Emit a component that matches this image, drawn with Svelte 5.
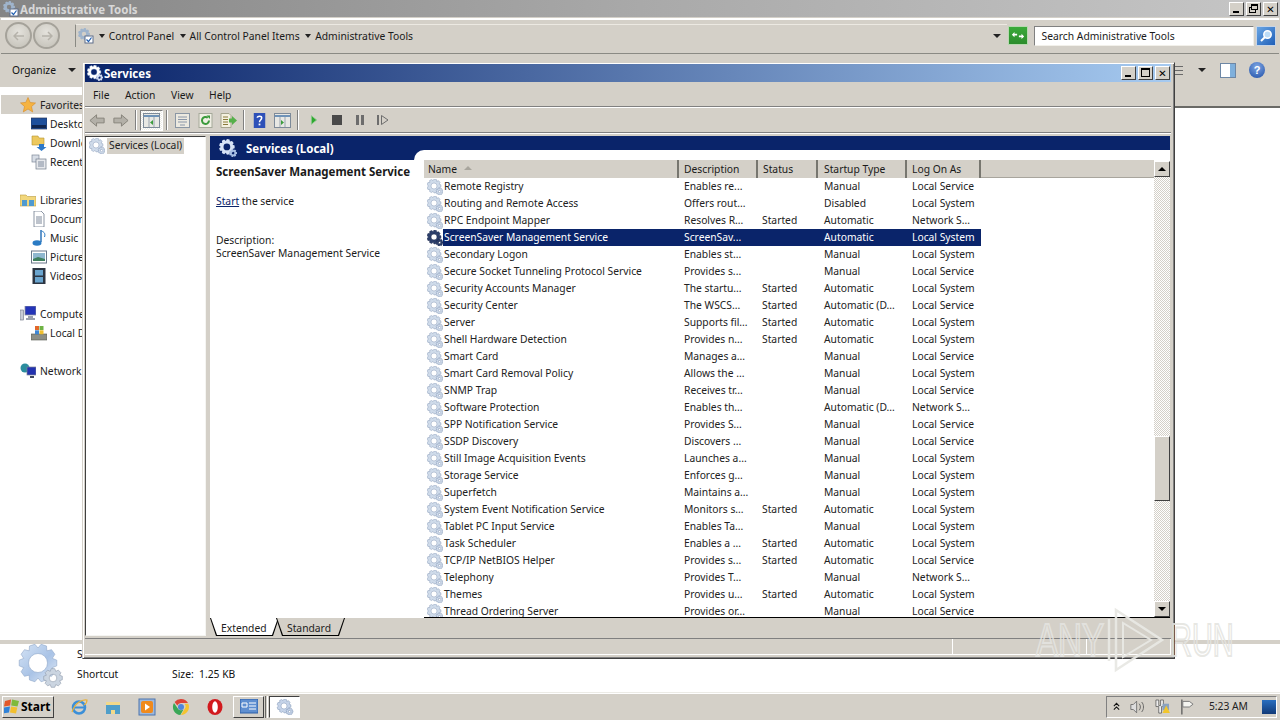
<script>
  const rows = [
    ["Remote Registry","Enables re...","","Manual","Local Service"],
    ["Routing and Remote Access","Offers rout...","","Disabled","Local System"],
    ["RPC Endpoint Mapper","Resolves R...","Started","Automatic","Network S..."],
    ["ScreenSaver Management Service","ScreenSav...","","Automatic","Local System"],
    ["Secondary Logon","Enables st...","","Manual","Local System"],
    ["Secure Socket Tunneling Protocol Service","Provides s...","","Manual","Local Service"],
    ["Security Accounts Manager","The startu...","Started","Automatic","Local System"],
    ["Security Center","The WSCS...","Started","Automatic (D...","Local Service"],
    ["Server","Supports fil...","Started","Automatic","Local System"],
    ["Shell Hardware Detection","Provides n...","Started","Automatic","Local System"],
    ["Smart Card","Manages a...","","Manual","Local Service"],
    ["Smart Card Removal Policy","Allows the ...","","Manual","Local System"],
    ["SNMP Trap","Receives tr...","","Manual","Local Service"],
    ["Software Protection","Enables th...","","Automatic (D...","Network S..."],
    ["SPP Notification Service","Provides S...","","Manual","Local Service"],
    ["SSDP Discovery","Discovers ...","","Manual","Local Service"],
    ["Still Image Acquisition Events","Launches a...","","Manual","Local System"],
    ["Storage Service","Enforces g...","","Manual","Local System"],
    ["Superfetch","Maintains a...","","Manual","Local System"],
    ["System Event Notification Service","Monitors s...","Started","Automatic","Local System"],
    ["Tablet PC Input Service","Enables Ta...","","Manual","Local System"],
    ["Task Scheduler","Enables a ...","Started","Automatic","Local System"],
    ["TCP/IP NetBIOS Helper","Provides s...","Started","Automatic","Local Service"],
    ["Telephony","Provides T...","","Manual","Network S..."],
    ["Themes","Provides u...","Started","Automatic","Local System"],
    ["Thread Ordering Server","Provides or...","","Manual","Local Service"]
  ];
  const nav = [
    { t: "Favorites", k: "star", top: true, hi: true },
    { t: "Desktop", k: "desk" }, { t: "Downloads", k: "down" }, { t: "Recent Places", k: "recent", end: true },
    { t: "Libraries", k: "lib", top: true },
    { t: "Documents", k: "doc" }, { t: "Music", k: "music" }, { t: "Pictures", k: "pic" }, { t: "Videos", k: "vid", end: true },
    { t: "Computer", k: "comp", top: true }, { t: "Local Disk (C:)", k: "disk", end: true },
    { t: "Network", k: "net", top: true }
  ];
  function gearPath(cx, cy, R, r, hole, n) {
    let d = "";
    const step = (Math.PI * 2) / n;
    for (let i = 0; i < n; i++) {
      const a = i * step;
      const pts = [[r, a - step * 0.5], [R, a - step * 0.24], [R, a + step * 0.24], [r, a + step * 0.5]];
      for (const [rad, ang] of pts) {
        d += (d ? "L" : "M") + (cx + rad * Math.cos(ang)).toFixed(2) + " " + (cy + rad * Math.sin(ang)).toFixed(2);
      }
    }
    d += "Z M" + (cx + hole) + " " + cy + " a" + hole + " " + hole + " 0 1 0 " + -2 * hole + " 0 a" + hole + " " + hole + " 0 1 0 " + 2 * hole + " 0Z";
    return d;
  }
  const gearBig = gearPath(7, 7, 7, 5.4, 3, 9);
  const gearSmall = gearPath(12.5, 12.5, 3.6, 2.6, 1.2, 7);
  const bigA = gearPath(21, 19, 19, 15, 9.5, 10);
  const bigB = gearPath(36, 34, 9.5, 7.2, 3.8, 8);
</script>

{#snippet gears(cls)}
  <svg class={cls} viewBox="0 0 16 16" aria-hidden="true">
    <path d={gearBig} fill-rule="evenodd" />
    <path d={gearSmall} fill-rule="evenodd" />
  </svg>
{/snippet}

{#snippet navIcon(k)}
  <svg class="nico" viewBox="0 0 16 16" aria-hidden="true">
    {#if k === "star"}
      <path d="M8 0.5l2.2 5 5.3.5-4 3.6 1.2 5.4L8 12l-4.7 2.9 1.2-5.4-4-3.6 5.3-.5z" fill="#f5b342" stroke="#d98a22" stroke-width=".6" />
    {:else if k === "desk"}
      <rect x="0" y="2" width="16" height="11" fill="#1d4f9c" stroke="#26365a" stroke-width=".7" /><rect x="1" y="9" width="14" height="3" fill="#10254e" />
    {:else if k === "down"}
      <path d="M1 1h6l1 2h5v7H1z" fill="#ecc85e" stroke="#b6952f" stroke-width=".6" /><path d="M8 9h5v3h2.5l-5 4-5-4H8z" fill="#2c78c9" />
    {:else if k === "recent"}
      <rect x="1" y="1" width="7" height="7" fill="#d8dee6" stroke="#7e8897" stroke-width=".7" /><rect x="5" y="5" width="10" height="10" fill="#e6e8ec" stroke="#707b8a" stroke-width=".7" /><path d="M7 8h6M7 10h6M7 12h6" stroke="#66748a" stroke-width=".8" />
    {:else if k === "lib"}
      <path d="M0 3h6l1.500 1.500H16V14H0z" fill="#f2d77c" stroke="#b89a40" stroke-width=".6" /><rect x="2" y="8" width="5" height="6" fill="#4f9ad0" /><rect x="9" y="8" width="5" height="6" fill="#4f9ad0" />
    {:else if k === "doc"}
      <path d="M3 0h7l3 3v13H3z" fill="#fff" stroke="#6e7b8e" stroke-width=".8" /><path d="M5 6h6M5 8h6M5 10h6M5 12h6" stroke="#5a6a80" stroke-width=".8" />
    {:else if k === "music"}
      <path d="M10 0v12" stroke="#1f6ab5" stroke-width="1.400" /><ellipse cx="6" cy="13" rx="4.500" ry="2.800" fill="#2a7bc4" /><path d="M10.500 1c3 1 4 3 3 6" stroke="#2a7bc4" fill="none" />
    {:else if k === "pic"}
      <rect x=".5" y="2" width="15" height="12" fill="#fff" stroke="#6a7789" /><rect x="2" y="4" width="12" height="8" fill="#8fb7cf" /><path d="M2 10l5-2 7 2v2H2z" fill="#3f7f5e" />
    {:else if k === "vid"}
      <rect x="1.500" y="0" width="13" height="16" fill="#2c3542" /><rect x="4" y="2" width="8" height="5.500" fill="#6aa5cf" /><rect x="4" y="9" width="8" height="5.500" fill="#6aa5cf" />
    {:else if k === "comp"}
      <rect x="5" y="0" width="11" height="9" fill="#2434b8" stroke="#8a8fa0" stroke-width=".8" /><rect x="0" y="4" width="3.500" height="10" fill="#c8ccd6" stroke="#6a7080" stroke-width=".6" /><path d="M8 10h5v2h2v2H6v-2h2z" fill="#9aa0ae" />
    {:else if k === "disk"}
      <rect x="0" y="9" width="16" height="6" fill="#8d8f86" stroke="#55574f" stroke-width=".6" /><rect x="4" y="1" width="4" height="4" fill="#e2672a" /><rect x="8.500" y="1" width="4" height="4" fill="#6fb344" /><rect x="4" y="5.300" width="4" height="4" fill="#3e86d4" /><rect x="8.500" y="5.300" width="4" height="4" fill="#f0c02f" />
    {:else if k === "net"}
      <circle cx="5" cy="5" r="4.500" fill="#2b8d9e" /><rect x="7" y="4" width="9" height="8" fill="#2232b0" stroke="#7d8294" stroke-width=".7" /><path d="M10 13h4v2h-4z" fill="#40495e" />
    {/if}
  </svg>
{/snippet}

{#snippet adminIcon(cls)}
  <svg class={cls} viewBox="0 0 16 16" aria-hidden="true">
    <path d={gearPath(6, 6, 6, 4.6, 2.2, 9)} fill="#9fb4cc" fill-rule="evenodd" /><rect x="7" y="8" width="8" height="7" fill="#fff" stroke="#5c6d8a" /><path d="M8.500 11.500l2 2 3-4" stroke="#1e5db0" fill="none" stroke-width="1.200" />
  </svg>
{/snippet}

<div class="desk">
  <div class="titlebar">
    {@render adminIcon("t-ico")}
    <span class="t-text">Administrative Tools</span>
    <div class="capbtns outer">
      <button class="cap"><i class="min"></i></button>
      <button class="cap"><i class="rest"></i></button>
      <button class="cap close">✕</button>
    </div>
  </div>

  <div class="addr">
    <div class="navbtns">
      <span class="round"><svg viewBox="0 0 12 10" aria-hidden="true"><path d="M5 1L1 5l4 4M1 5h10" /></svg></span>
      <span class="round"><svg viewBox="0 0 12 10" aria-hidden="true"><path d="M7 1l4 4-4 4M11 5H1" /></svg></span>
    </div>
    <div class="crumbs">
      {@render adminIcon("cr-ico")}
      <i class="tri"></i><span>Control Panel</span>
      <i class="tri"></i><span>All Control Panel Items</span>
      <i class="tri"></i><span>Administrative Tools</span>
      <i class="tri far"></i>
    </div>
    <span class="go"><svg viewBox="0 0 16 12" aria-hidden="true"><path d="M1 5l3-3v2h3v2H4v2zM15 7l-3 3V8H9V6h3V4z" fill="#fff" /></svg></span>
    <div class="search">Search Administrative Tools</div>
    <span class="sbtn"><svg viewBox="0 0 14 14" aria-hidden="true"><circle cx="8.500" cy="5.500" r="3.700" fill="#bcdcf7" stroke="#fff" stroke-width="1.500" /><path d="M6 8l-4 4" stroke="#fff" stroke-width="2" /></svg></span>
  </div>

  <div class="orgbar">
    <span class="org">Organize</span><i class="tri"></i>
    <span class="org-right">
      <svg class="lines" viewBox="0 0 8 11" aria-hidden="true"><path d="M0 1.500h8M0 5.500h8M0 9.500h8" stroke="#6a6a6a" /></svg>
      <i class="tri"></i>
      <span class="pane-ic"></span>
      <span class="help">?</span>
    </span>
  </div>

  <div class="main">
    <div class="navtree">
      {#each nav as n}
        <div class="nrow" class:top={n.top} class:hi={n.hi} class:end={n.end}>
          {@render navIcon(n.k)}<span>{n.t}</span>
        </div>
      {/each}
    </div>
    <div class="colhead"></div>
  </div>

  <div class="details">
    <svg class="biggear" viewBox="0 0 46 44" aria-hidden="true">
      <defs>
        <linearGradient id="gb" x1="0" y1="0" x2="1" y2="1">
          <stop offset="0" stop-color="#d6e4f5" /><stop offset=".55" stop-color="#a9c3e6" /><stop offset="1" stop-color="#e4ecf6" />
        </linearGradient>
      </defs>
      <path d={bigA} fill="url(#gb)" stroke="#8ea6c8" stroke-width=".6" fill-rule="evenodd" />
      <path d={bigB} fill="#cbd5e1" stroke="#8f9bab" stroke-width=".6" fill-rule="evenodd" />
    </svg>
    <div class="dtext">
      <div class="dname">Services</div>
      <div class="dmeta"><span class="dkind">Shortcut</span><span>Size:&nbsp; 1.25 KB</span></div>
    </div>
  </div>

  <div class="taskbar">
    <button class="start">
      <svg viewBox="0 0 16 15" aria-hidden="true">
        <path d="M1 2l6-1.500L6.200 6.500 0 7.500z" fill="#e2582a" /><path d="M8 .5l7 1.500-1.500 5.500L7.200 6.500z" fill="#7fb93a" /><path d="M0 8.500l6-1-1 6-6.200 1z" fill="#2f82d8" /><path d="M7 7.500l6.300 1-1.300 6-6-1z" fill="#f2bf2e" />
      </svg>Start
    </button>
    <div class="quick">
      <svg viewBox="0 0 18 18" aria-hidden="true"><circle cx="9" cy="9.500" r="6" fill="none" stroke="#3b8fd8" stroke-width="2.500" /><path d="M3 9.500h12" stroke="#3b8fd8" stroke-width="2" /><path d="M2 14C5 5 12 1 17 2c0 2-1 4-3 5" fill="none" stroke="#e9b23a" stroke-width="1.200" /></svg>
      <svg viewBox="0 0 18 18" aria-hidden="true"><path d="M2 4h14v12H2z" fill="#f2d98a" /><path d="M2 7h14v9h-5v-4H7v4H2z" fill="#4f9ec9" /></svg>
      <svg viewBox="0 0 18 18" aria-hidden="true"><rect x="1" y="1" width="16" height="16" fill="#9db8dc" stroke="#4d75ad" /><rect x="3" y="3" width="12" height="12" rx="2" fill="#f08a1c" /><path d="M7 5.500l5 3.500-5 3.500z" fill="#fff" /></svg>
      <svg viewBox="0 0 18 18" aria-hidden="true"><path d="M9 1a8 8 0 0 1 7 4H9a4 4 0 0 0-3.700 2.500L2.600 4A8 8 0 0 1 9 1z" fill="#dc4438" /><path d="M16.300 5.800A8 8 0 0 1 9 17l3.400-5.800a4 4 0 0 0 0-5.400z" fill="#f4c430" /><path d="M2 5a8 8 0 0 0 6.300 12l3.200-5.500a4 4 0 0 1-6-1.500z" fill="#3aa757" /><circle cx="9" cy="9" r="3" fill="#4e86dc" /></svg>
      <svg viewBox="0 0 18 18" aria-hidden="true"><ellipse cx="9" cy="9" rx="7.500" ry="8" fill="#d21a1e" /><ellipse cx="9" cy="9" rx="2.800" ry="5.800" fill="#fff" /></svg>
    </div>
    <button class="tb-btn"><svg viewBox="0 0 18 16" aria-hidden="true"><rect x="0" y="0" width="18" height="14" fill="#5f8fd0" stroke="#2d5ea8" /><path d="M2 4h5v4H2zM9 4h7M9 7h7M9 10h7" stroke="#fff" fill="none" /></svg></button>
    <span class="tb-sep"></span>
    <button class="tb-btn active">{@render gears("gear g-task")}</button>
    <div class="tray">
      <svg class="tr-ar" viewBox="0 0 8 9" aria-hidden="true"><path d="M1 4l3-3 3 3M1 8l3-3 3 3" stroke="#111" fill="none" stroke-width="1.300" /></svg>
      <svg class="tr-ic" viewBox="0 0 18 16" aria-hidden="true"><path d="M1 5h3l4-4v14l-4-4H1z" fill="#ddd" stroke="#666" /><path d="M11 4c2 2 2 6 0 8M14 2c3 3 3 9 0 12" stroke="#555" fill="none" /></svg>
      <svg class="tr-ic" viewBox="0 0 16 17" aria-hidden="true"><path d="M1 1h3v6h2V1h3v7H7v7H4V8H1z" fill="#eee" stroke="#555" stroke-width=".8" /><rect x="8" y="5" width="7" height="7" fill="#8aa2bf" /><path d="M12 7l4 8H8z" fill="#f2c62c" /></svg>
      <svg class="tr-ic" viewBox="0 0 16 16" aria-hidden="true"><path d="M2 0v16" stroke="#555" stroke-width="1.300" /><path d="M3 2h7l4 3-4 3H3z" fill="#f4f4f0" stroke="#777" /></svg>
      <span class="clock">5:23 AM</span>
      <span class="showdesk"></span>
    </div>
  </div>

  <!-- Services window floats over the explorer window -->
  <div class="win">
    <div class="w-title">
      <svg class="w-ico" viewBox="0 0 16 16" aria-hidden="true"><path d={gearBig} fill="#fff" stroke="#8aa6d0" stroke-width=".4" fill-rule="evenodd" /><path d={gearSmall} fill="#cfdaf0" fill-rule="evenodd" /></svg>
      <span>Services</span>
      <div class="capbtns inner">
        <button class="cap"><i class="min"></i></button>
        <button class="cap"><i class="max"></i></button>
        <button class="cap close">✕</button>
      </div>
    </div>
    <div class="menubar"><span>File</span><span>Action</span><span>View</span><span>Help</span></div>
    <div class="toolbar">
      <span class="ti"><svg viewBox="0 0 18 14" aria-hidden="true"><path d="M8 1L1 7l7 6V9.500h8v-5H8z" class="ghost" /></svg></span>
      <span class="ti"><svg viewBox="0 0 18 14" aria-hidden="true"><path d="M10 1l7 6-7 6V9.500H2v-5h8z" class="ghost" /></svg></span>
      <i class="tsep"></i>
      <span class="ti on"><svg viewBox="0 0 17 15" aria-hidden="true"><rect x=".5" y=".5" width="16" height="14" fill="#e8e8e4" stroke="#7d8a99" /><path d="M1 3h15" stroke="#6f93b8" stroke-width="2" /><path d="M6 4v10M11 4v10" stroke="#9aa5b0" /><path d="M10 7l-3 2.500 3 2.500z" fill="#3c9c3c" /></svg></span>
      <i class="tsep"></i>
      <span class="ti"><svg viewBox="0 0 15 15" aria-hidden="true"><rect x=".5" y=".5" width="14" height="14" fill="#ece9e0" stroke="#8a96a4" /><path d="M3 4h9M3 6.500h9M3 9h9M5 12h5" stroke="#8a96a8" /></svg></span>
      <span class="ti"><svg viewBox="0 0 14 15" aria-hidden="true"><rect x=".5" y=".5" width="13" height="14" fill="#f0efe4" stroke="#a5a99a" /><path d="M10.500 7.500a3.500 3.500 0 1 1-1.200-2.700" fill="none" stroke="#3a9a3a" stroke-width="2" /><path d="M8 2.500h3.500V6z" fill="#3a9a3a" /></svg></span>
      <span class="ti"><svg viewBox="0 0 17 15" aria-hidden="true"><path d="M1 .5h8l2 2v12H1z" fill="#f4f1e0" stroke="#a5a48d" /><path d="M3 4h5M3 6.500h5M3 9h5M3 11.500h5" stroke="#8a7a3a" /><path d="M9 5.500h3V3l5 4.500-5 4.500V9.500H9z" fill="#56b04a" /></svg></span>
      <i class="tsep"></i>
      <span class="ti"><svg viewBox="0 0 13 17" aria-hidden="true"><rect width="13" height="17" fill="#2d50b8" /><path d="M4 5.500C4 3 9 3 9 5.500 9 8 6.500 8 6.500 10.500" fill="none" stroke="#fff" stroke-width="1.700" /><rect x="5.500" y="12" width="2" height="2" fill="#fff" /></svg></span>
      <span class="ti"><svg viewBox="0 0 17 15" aria-hidden="true"><rect x=".5" y=".5" width="16" height="14" fill="#e8e8e4" stroke="#7d8a99" /><path d="M1 3h15" stroke="#6f93b8" stroke-width="2" /><path d="M6 4v10M11 4v10" stroke="#9aa5b0" /><path d="M7 7l3 2.500-3 2.500z" fill="#3c9c3c" /></svg></span>
      <i class="tsep"></i>
      <span class="ti"><svg viewBox="0 0 12 14" class="s12" aria-hidden="true"><path d="M3 2l6 5-6 5z" fill="#2fa82f" stroke="#8ac88a" /></svg></span>
      <span class="ti"><svg viewBox="0 0 12 12" class="s12" aria-hidden="true"><rect x="1" y="1" width="10" height="10" fill="#4a4a4a" /></svg></span>
      <span class="ti"><svg viewBox="0 0 12 12" class="s12" aria-hidden="true"><path d="M2 1h3v10H2zM7 1h3v10H7z" fill="#6d6d6d" /></svg></span>
      <span class="ti"><svg viewBox="0 0 14 12" class="s14" aria-hidden="true"><path d="M1 1h2v10H1z" fill="#6d6d6d" /><path d="M5.500 1.500l6.500 4.500-6.500 4.500z" fill="#d4d0c8" stroke="#6d6d6d" /></svg></span>
    </div>

    <div class="content">
      <div class="tree">
        <div class="tree-row">{@render gears("gear g-list")}<span>Services (Local)</span></div>
      </div>
      <div class="pane">
        <div class="band">
          <svg class="band-ico" viewBox="0 0 16 16" aria-hidden="true"><path d={gearBig} fill="#d7e3f6" fill-rule="evenodd" /><path d={gearSmall} fill="#a9bfe3" fill-rule="evenodd" /></svg>
          <span>Services (Local)</span>
        </div>
        <div class="split">
          <div class="info">
            <div class="i-title">ScreenSaver Management Service</div>
            <div class="i-start"><a href="#start">Start</a> the service</div>
            <div class="i-desc">Description:<br />ScreenSaver Management Service</div>
          </div>
          <div class="listwrap">
            <div class="list">
              <div class="head">
                <span class="h c-name">Name<i class="sort"></i></span>
                <span class="h c-desc">Description</span>
                <span class="h c-stat">Status</span>
                <span class="h c-type">Startup Type</span>
                <span class="h c-log">Log On As</span>
                <span class="h-rest"></span>
              </div>
              <div class="body">
                {#each rows as r, i}
                  <div class="row" class:sel={i === 3}>
                    {@render gears(i === 3 ? "gear g-dark" : "gear g-list")}
                    <div class="cells">
                      <span class="c-name2">{r[0]}</span>
                      <span class="c-desc">{r[1]}</span>
                      <span class="c-stat">{r[2]}</span>
                      <span class="c-type">{r[3]}</span>
                      <span class="c-log">{r[4]}</span>
                    </div>
                  </div>
                {/each}
              </div>
            </div>
            <div class="sbar">
              <span class="arrbtn"><i class="up"></i></span>
              <span class="track"><span class="thumb"></span></span>
              <span class="arrbtn"><i class="dn"></i></span>
            </div>
          </div>
        </div>
        <div class="tabs">
          <span class="tab act">Extended</span>
          <span class="tab second">Standard</span>
        </div>
      </div>
    </div>
    <div class="statusbar"><span class="s1"></span><span class="s2"></span><span class="s3"></span></div>
  </div>

  <div class="mark">
    <span class="m-any">ANY</span>
    <svg class="m-play" viewBox="0 0 60 66" aria-hidden="true"><path d="M10 3v60l46-30zM3 12v42" /><path d="M17 16v34l28-17z" class="m-in" /></svg>
    <span class="m-run">RUN</span>
  </div>
</div>

<style>
  :global(body) { margin: 0; background: #fff; }
  * { box-sizing: border-box; }
  i { display: block; font-style: normal; }
  button { font: inherit; padding: 0; margin: 0; }
  .desk {
    width: 1280px; height: 720px; position: relative; overflow: hidden;
    display: flex; flex-direction: column; background: #fff;
    font: 10.3px/13px "Noto Sans", "Open Sans", sans-serif; color: #111;
  }
  .titlebar {
    height: 18px; flex: none; display: flex; align-items: center; padding-left: 3px;
    background: linear-gradient(90deg, #858585, #a9a9a9 50%, #c6c6c6);
  }
  :global(.t-ico) { width: 16px; height: 16px; }
  .t-text { font: bold 11.5px "Noto Sans", sans-serif; color: #d8d8d8; margin-left: 1px; }
  .capbtns { margin-left: auto; display: flex; gap: 2px; }
  .capbtns.outer { margin-right: 2px; }
  .capbtns.inner { margin-right: 1px; }
  .cap {
    width: 15px; height: 14px; background: #d4d0c8; position: relative;
    border: 1px solid; border-color: #fff #404040 #404040 #fff;
    font: bold 10px/11px "DejaVu Sans", sans-serif; color: #000; text-align: center;
  }
  .cap .min { position: absolute; left: 3px; bottom: 2px; width: 6px; height: 2px; background: #000; }
  .cap .max { position: absolute; left: 2px; top: 1px; width: 9px; height: 9px; border: 1px solid #000; border-top-width: 2px; }
  .cap .rest { position: absolute; left: 4px; top: 1px; width: 7px; height: 6px; border: 1px solid #000; border-top-width: 2px; box-shadow: -2px 3px 0 -1px #d4d0c8, -2px 3px 0 0 #000; }

  .addr {
    height: 36px; flex: none; display: flex; align-items: center; background: #d4d0c8;
    border-top: 2px solid #fff; border-bottom: 1px solid #8a8a84; padding: 0 3px 2px 4px; margin: 0 1px;
    outline: 1px solid #d4d0c8;
  }
  .navbtns { display: flex; gap: 1px; width: 70px; }
  .round {
    width: 27px; height: 27px; border-radius: 50%; background: radial-gradient(circle at 50% 35%, #e4e2dc, #c2bfb6);
    border: 2px solid #a5a29a; display: flex; align-items: center; justify-content: center;
  }
  .round svg { width: 12px; height: 10px; fill: none; stroke: #b5b2aa; stroke-width: 1.500; }
  .crumbs {
    width: 934px; height: 23px; display: flex; align-items: center; gap: 4px;
    border-left: 1px solid #8a8a84; border-top: 1px solid #ece9e2; padding-left: 2px; color: #1a1a1a;
  }
  .crumbs span { margin-right: 1.5px; }
  :global(.cr-ico) { width: 16px; height: 16px; margin-right: 1px; flex: none; }
  .tri { width: 0; height: 0; border: 3.500px solid transparent; border-top: 4px solid #222; border-bottom: 0; }
  .tri.far { margin-left: auto; margin-right: 6px; border-left-width: 4px; border-right-width: 4px; }
  .go {
    width: 20px; height: 19px; background: linear-gradient(#3aaa3a, #2c8c2c); border: 1px solid #b7d9b0;
    display: flex; align-items: center; justify-content: center; margin-left: 1px;
  }
  .go svg { width: 14px; height: 11px; }
  .search {
    width: 221px; height: 20px; margin-left: 6px; background: #fff; padding: 3px 0 0 7px;
    border: 1px solid; border-color: #808080 #f2f0ea #f2f0ea #808080; color: #1a1a1a;
  }
  .sbtn {
    width: 20px; height: 20px; margin-left: 2px; background: linear-gradient(135deg, #6aa6e4, #1f5fb8);
    border: 1px solid #c8d4e4; display: flex; align-items: center; justify-content: center;
  }
  .sbtn svg { width: 14px; height: 14px; }

  .orgbar {
    height: 33px; flex: none; background: #d4d0c8; display: flex; align-items: center; padding: 0 0 1px 12px; gap: 12px;
  }
  .orgbar .tri { border-left-width: 4px; border-right-width: 4px; }
  .org-right { margin-left: auto; display: flex; align-items: center; }
  .lines { width: 8px; height: 11px; margin-right: 15px; }
  .pane-ic {
    width: 16px; height: 15px; margin-left: 14px; background: linear-gradient(90deg, #fff 0 65%, #7fb0dc 65%);
    border: 1px solid #6d87a5;
  }
  .help {
    width: 16px; height: 16px; margin: 0 15px 0 13px; border-radius: 50%; background: radial-gradient(circle at 50% 30%, #7ea6e4, #1e4ea6);
    color: #fff; font: bold 11px/16px "Liberation Sans", sans-serif; text-align: center;
  }

  .main { flex: 1; min-height: 0; position: relative; display: flex; border-bottom: 4px solid #d4d0c8; }
  .navtree { width: 82px; padding: 8px 0 0 1px; overflow: hidden; }
  .nrow { height: 19px; display: flex; align-items: center; padding-left: 30px; white-space: nowrap; gap: 3px; color: #222; }
  .nrow span { margin-top: 2px; }
  .nrow.top { padding-left: 19px; gap: 4px; }
  .nrow.hi { background: #d4d0c8; }
  .nrow.end { margin-bottom: 19px; }
  .nico { width: 16px; height: 16px; flex: none; }
  .colhead {
    position: absolute; top: 0; right: 0; width: 106px; height: 21px; background: #d4d0c8; border-bottom: 2px solid #6a6a66;
  }

  .details { height: 48px; flex: none; display: flex; padding-left: 17px; background: #fff; }
  .biggear { width: 46px; height: 44px; flex: none; }
  .dtext { margin-left: 14px; padding-top: 4px; }
  .dname { height: 20px; }
  .dmeta { display: flex; }
  .dkind { width: 95px; }

  .taskbar {
    height: 28px; flex: none; background: #d4d0c8; border-top: 1px solid #ecebe6; display: flex; align-items: center; padding-left: 2px;
    box-shadow: inset 0 1px 0 #fff;
  }
  .start {
    width: 52px; height: 22px; background: #d4d0c8; border: 1px solid; border-color: #fff #404040 #404040 #fff;
    display: flex; align-items: center; gap: 1px; padding-left: 1px; font: bold 12px "Noto Sans", sans-serif; color: #000;
  }
  .start svg { width: 16px; height: 15px; }
  .quick { display: flex; gap: 16px; padding-left: 16px; width: 179px; }
  .quick svg { width: 18px; height: 18px; flex: none; }
  .tb-btn {
    width: 31px; height: 22px; background: #d4d0c8; border: 1px solid; border-color: #fff #404040 #404040 #fff;
    display: flex; align-items: center; justify-content: center;
  }
  .tb-btn svg { width: 18px; height: 16px; }
  .tb-sep { width: 3px; height: 22px; margin: 0 1px; border-left: 1px solid #6a6a66; border-right: 1px solid #fff; }
  .tb-btn.active { background: #fff; border-color: #404040 #fff #fff #404040; }
  .tray {
    margin-left: auto; margin-right: 3px; width: 171px; height: 22px; display: flex; align-items: center;
    border: 1px solid; border-color: #808080 #fff #fff #808080; padding-left: 6px;
  }
  .tr-ar { width: 8px; height: 9px; }
  .tr-ic { width: 17px; height: 16px; margin-left: 10px; }
  .clock { margin-left: 14px; color: #222; white-space: nowrap; }
  .showdesk { width: 16px; height: 14px; margin-left: 14px; background: linear-gradient(#2a6fc0, #123a78); }

  :global(.gear) { display: block; flex: none; }
  :global(.g-list) { width: 16px; height: 16px; fill: #cfdbea; stroke: #8a9dba; stroke-width: .5; }
  :global(.g-dark) { width: 16px; height: 16px; fill: #2b3e6a; stroke: #16244a; stroke-width: .5; }
  :global(.g-task) { fill: #c5d3e8; stroke: #7e94b4; stroke-width: .5; }

  .win {
    position: absolute; left: 82px; top: 62px; width: 1093px; height: 597px; display: flex; flex-direction: column;
    background: #d4d0c8; border: 1px solid; border-color: #d4d0c8 #404040 #404040 #d4d0c8;
    box-shadow: inset 1px 1px 0 #fff, inset -1px -1px 0 #808080; padding: 1px 3px 3px 2px;
  }
  .w-title {
    height: 18px; flex: none; display: flex; align-items: center; padding-left: 2px;
    background: linear-gradient(90deg, #0a246a, #a6caf0);
    font: bold 11.5px "Noto Sans", sans-serif; color: #fff;
  }
  .w-ico { width: 16px; height: 16px; margin-right: 1px; }
  .menubar {
    height: 25px; flex: none; display: flex; align-items: center; padding: 3px 0 0 8px; border-bottom: 1px solid #808080;
    box-shadow: 0 1px 0 #fff;
  }
  .menubar span { margin-right: 15.5px; color: #1a1a1a; }
  .toolbar {
    height: 26px; flex: none; display: flex; align-items: center; padding: 1px 0 0 1px; border-bottom: 1px solid #808080; box-shadow: 0 1px 0 #fff;
  }
  .ti { width: 23px; height: 21px; display: flex; align-items: center; justify-content: center; flex: none; }
  .ti.on { background: repeating-conic-gradient(#ecebe6 0 25%, #fff 0 50%) 0 0/2px 2px; border: 1px solid; border-color: #808080 #fff #fff #808080; }
  .ti svg { width: 17px; height: 15px; }
  .ti svg.s12 { width: 12px; height: 12px; }
  .ti svg.s14 { width: 14px; height: 12px; }
  .ghost { fill: #b3b0a8; stroke: #858279; }
  .tsep { width: 2px; height: 20px; margin: 0 3px; border-left: 1px solid #808080; border-right: 1px solid #fff; flex: none; }

  .content { flex: 1; min-height: 0; display: flex; padding: 3px 1px 2px 0; gap: 4px; }
  .tree {
    width: 121px; flex: none; background: #fff; border: 1px solid; border-color: #404040 #f5f5f2 #f5f5f2 #404040; padding: 0 0 0 3px;
  }
  .tree-row { display: flex; align-items: center; gap: 2px; height: 17px; }
  .tree-row span { background: #d4d0c8; padding: 1px 2px 2px 2px; white-space: nowrap; color: #222; }
  .pane { flex: 1; min-width: 0; display: flex; flex-direction: column; background: #fff; }
  .band {
    height: 24px; flex: none; background: #0a246a; color: #fff; display: flex; align-items: center; position: relative;
    padding: 0 0 0 9px; font: bold 11.5px "Noto Sans", sans-serif; gap: 9px;
  }
  .band::after {
    content: ""; position: absolute; left: 204px; right: 0; top: 14px; bottom: 0; background: #fff; border-top-left-radius: 10px;
  }
  .band-ico { width: 18px; height: 18px; }
  .split { flex: 1; min-height: 0; display: flex; }
  .info { width: 214px; flex: none; padding: 5px 0 0 6px; color: #1a1a1a; }
  .i-title { font-weight: 700; font-size: 11.5px; white-space: nowrap; }
  .i-start { margin-top: 17px; }
  .i-start a { color: #0a246a; text-decoration: underline; }
  .i-desc { margin-top: 26px; white-space: nowrap; }
  .listwrap { flex: 1; min-width: 0; display: flex; border-bottom: 1px solid #000; }
  .list { flex: 1; min-width: 0; display: flex; flex-direction: column; }
  .head { height: 18px; flex: none; display: flex; background: #d4d0c8; }
  .h { height: 18px; padding: 3px 0 0 4px; border-right: 2px solid #77766f; position: relative; color: #1a1a1a; flex: none; }
  .h-rest { flex: 1; border-bottom: 1px solid #a8a59d; }
  .sort { position: absolute; left: 40px; top: 6px; border: 4px solid transparent; border-bottom: 4px solid #a8a59d; border-top: 0; }
  .head .c-name { width: 255px; }
  .head .c-desc { width: 79px; padding-left: 5px; }
  .head .c-stat { width: 60px; padding-left: 5px; }
  .head .c-type { width: 89px; padding-left: 6px; }
  .head .c-log { width: 74px; padding-left: 5px; }
  .body { flex: 1; min-height: 0; overflow: hidden; }
  .row { height: 17px; display: flex; align-items: center; padding-left: 3px; color: #222; }
  .cells { display: flex; height: 17px; align-items: center; white-space: nowrap; padding-bottom: 1px; }
  .sel .cells { background: #0a246a; color: #fff; }
  .c-name2 { width: 236px; flex: none; padding-left: 1px; }
  .cells .c-desc { width: 79px; padding-left: 5px; flex: none; }
  .cells .c-stat { width: 60px; padding-left: 4px; flex: none; }
  .cells .c-type { width: 89px; padding-left: 6px; flex: none; }
  .cells .c-log { width: 74px; padding-left: 5px; flex: none; }
  .sbar { width: 16px; flex: none; display: flex; flex-direction: column; margin-top: 1px; }
  .arrbtn {
    height: 16px; flex: none; background: #d4d0c8; border: 1px solid; border-color: #fff #404040 #404040 #fff;
    display: flex; align-items: center; justify-content: center;
  }
  .up { border: 4px solid transparent; border-bottom: 4px solid #000; border-top: 0; }
  .dn { border: 4px solid transparent; border-top: 4px solid #000; border-bottom: 0; }
  .track {
    flex: 1; padding-top: 259px;
    background: repeating-conic-gradient(#d4d0c8 0 25%, #fff 0 50%) 0 0/2px 2px;
  }
  .thumb { display: block; height: 65px; background: #d4d0c8; border: 1px solid; border-color: #fff #404040 #404040 #fff; }
  .tabs { height: 18px; flex: none; display: flex; background: #d4d0c8; }
  .tab { height: 18px; padding: 4px 0 0 11px; width: 69px; color: #222; clip-path: polygon(0 0, 100% 0, calc(100% - 6px) 100%, 6px 100%); background: #000; position: relative; z-index: 0; }
  .tab::before { content: ""; position: absolute; inset: 0 1px 1px; background: #d4d0c8; clip-path: polygon(0 0, 100% 0, calc(100% - 6px) 100%, 6px 100%); z-index: -1; }
  .tab.act::before { background: #fff; }
  .tab.second { margin-left: -3px; }
  .statusbar { height: 17px; flex: none; display: flex; border-top: 1px solid #808080; }
  .statusbar span { border-bottom: 1px solid #fff; border-right: 1px solid #fff; height: 16px; }
  .s1 { width: 868px; }
  .s2 { width: 134px; }
  .s3 { flex: 1; }

  .mark {
    position: absolute; left: 1036px; top: 607px; height: 66px; display: flex; align-items: center; pointer-events: none; color: transparent;
    font: 400 46px/66px "Liberation Sans", sans-serif; -webkit-text-stroke: 2px rgba(228, 228, 224, .9);
  }
  .m-any { width: 70px; transform: scaleX(.72); transform-origin: 0 50%; white-space: nowrap; }
  .m-play { width: 60px; height: 66px; flex: none; fill: none; stroke: rgba(232, 232, 228, .95); stroke-width: 2.5; }
  .m-in { stroke-width: 2; }
  .m-run { width: 70px; margin-left: 5px; transform: scaleX(.63); transform-origin: 0 50%; white-space: nowrap; }
</style>
